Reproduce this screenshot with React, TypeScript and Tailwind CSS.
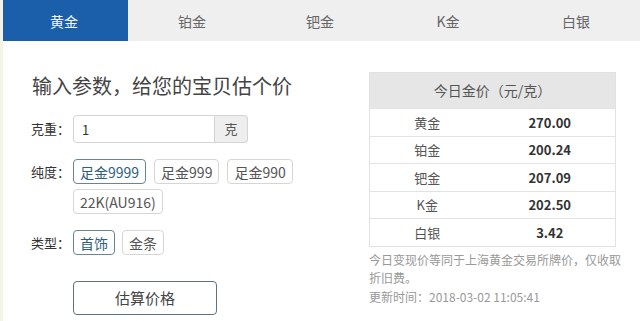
import React, { useState } from 'react';

const tabs = ['黄金', '铂金', '钯金', 'K金', '白银'];
const purities = ['足金9999', '足金999', '足金990', '22K(AU916)'];
const kinds = ['首饰', '金条'];
const prices = [
    { name: '黄金', value: '270.00' },
    { name: '铂金', value: '200.24' },
    { name: '钯金', value: '207.09' },
    { name: 'K金', value: '202.50' },
    { name: '白银', value: '3.42' },
];

const font = { fontFamily: '"Noto Sans CJK SC", "Noto Sans", sans-serif' };

const Chip: React.FC<{ label: string; active: boolean; onClick: () => void }> = ({ label, active, onClick }) => (
    <button
        onClick={onClick}
        className={`h-[25px] px-[6px] rounded-[4px] border text-[14px] leading-none bg-white ${
            active ? 'border-[#6b8494] text-[#2e5f7e]' : 'border-[#d6d6d6] text-[#555]'
        }`}
    >
        {label}
    </button>
);

export default function App() {
    const [activeTab, setActiveTab] = useState(0);
    const [purity, setPurity] = useState(0);
    const [kind, setKind] = useState(0);
    const [weight, setWeight] = useState('1');

    return (
        <div className="w-[640px] h-[321px] bg-white overflow-hidden border-l-[3px] border-[#f3f4e4]" style={font}>
            {/* Tabs */}
            <div className="flex h-[41px] bg-[#efefef] -ml-[3px]">
                {tabs.map((t, i) => (
                    <button
                        key={t}
                        onClick={() => setActiveTab(i)}
                        className={`w-[128px] h-full pt-[2px] text-[14px] ${
                            activeTab === i ? 'bg-[#1b5fab] text-[#eef6ff]' : 'text-[#666]'
                        }`}
                    >
                        {t}
                    </button>
                ))}
            </div>

            <div className="flex pt-[31px] pl-[28px]">
                {/* Left: form */}
                <div className="w-[338px]">
                    <h2 className="text-[20px] leading-[28px] text-[#444] pl-[1px]">输入参数，给您的宝贝估个价</h2>

                    <div className="flex items-center mt-[15px]">
                        <span className="w-[42px] text-[13px] text-[#333]">克重：</span>
                        <div className="flex h-[28px]">
                            <input
                                value={weight}
                                onChange={e => setWeight(e.target.value)}
                                className="w-[142px] h-full border border-[#d4d4d4] rounded-l-[4px] px-[8px] text-[13px] text-[#333] outline-none"
                            />
                            <span className="w-[33px] h-full flex items-center justify-center border border-l-0 border-[#d4d4d4] rounded-r-[4px] bg-[#eeeeee] text-[13px] text-[#555]">
                                克
                            </span>
                        </div>
                    </div>

                    <div className="flex items-start mt-[16px]">
                        <span className="w-[42px] text-[13px] leading-[25px] text-[#333]">纯度：</span>
                        <div className="flex flex-wrap gap-x-[8px] gap-y-[5px] w-[230px]">
                            {purities.map((p, i) => (
                                <Chip key={p} label={p} active={purity === i} onClick={() => setPurity(i)} />
                            ))}
                        </div>
                    </div>

                    <div className="flex items-center mt-[16px]">
                        <span className="w-[42px] text-[13px] text-[#333]">类型：</span>
                        <div className="flex gap-[7px]">
                            {kinds.map((k, i) => (
                                <Chip key={k} label={k} active={kind === i} onClick={() => setKind(i)} />
                            ))}
                        </div>
                    </div>

                    <button className="ml-[42px] mt-[26px] w-[144px] h-[34px] rounded-[4px] border border-[#5f7180] text-[15px] text-[#444] bg-white">
                        估算价格
                    </button>
                </div>

                {/* Right: price table */}
                <div className="w-[254px]">
                    <div className="w-[247px] border border-[#e2e2e2]">
                        <div className="h-[35px] bg-[#e6e6e6] flex items-center justify-center text-[14px] text-[#555]">
                            今日金价（元/克）
                        </div>
                        {prices.map(p => (
                            <div key={p.name} className="grid grid-cols-2 h-[27.6px] border-t border-[#e2e2e2] items-center text-[13px]">
                                <span className="text-center text-[#555] pr-[8px]">{p.name}</span>
                                <span className="text-center font-bold text-[#333] pr-[8px]">{p.value}</span>
                            </div>
                        ))}
                    </div>
                    <p className="mt-[4px] text-[12px] leading-[18.5px] text-[#999]">
                        今日变现价等同于上海黄金交易所牌价，仅收取折旧费。
                        <br />
                        更新时间：2018-03-02 11:05:41
                    </p>
                </div>
            </div>
        </div>
    );
}
